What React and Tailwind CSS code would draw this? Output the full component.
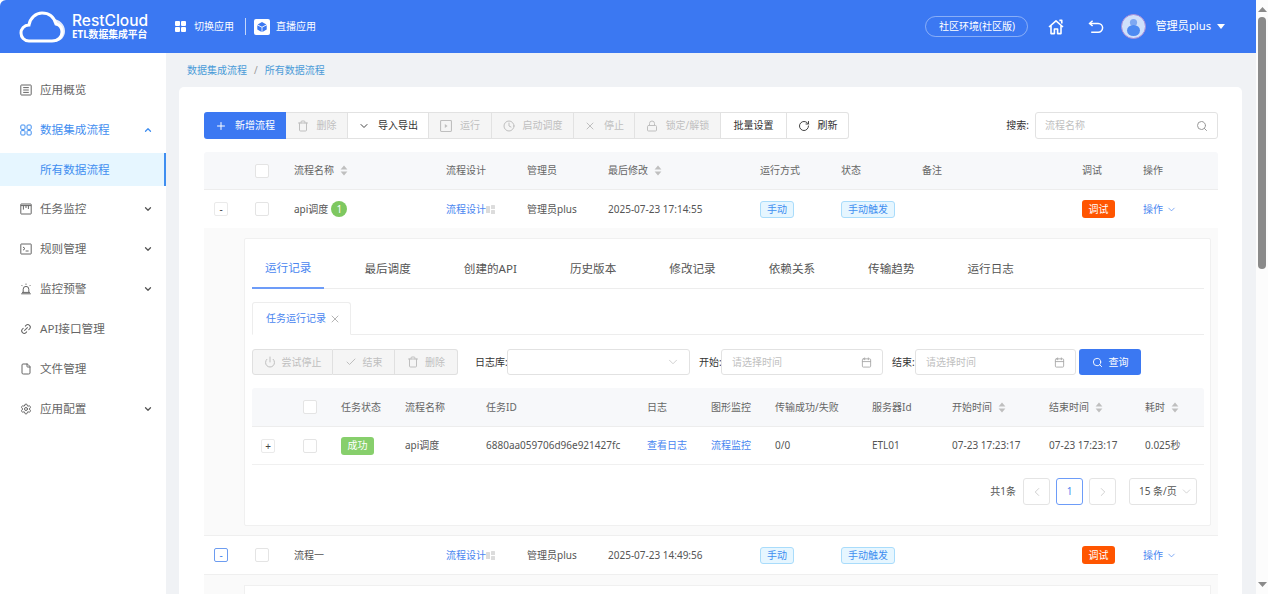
import React from "react";
import {
  Check, ChevronDown, ChevronLeft, ChevronRight, ChevronUp, Clock, File, Lock, Plus, Power,
  RotateCw, Search, Settings, Trash, X, Calendar, Link2,
} from "lucide-react";

const FONT = { fontFamily: '"Noto Sans","Noto Sans CJK SC",sans-serif' };

const Cloud = () => (
  <svg width="48" height="32" viewBox="0 0 48 32" fill="none">
    <path d="M34 8c6 0 12 5 12 12 0 6-4 10-10 11H24c8-1 13-5 13-11 0-5-2-9-3-12z" fill="#fff" fillOpacity=".85" />
    <path d="M10 30C5 30 2 26 2 22c0-4 3-8 8-8 1-7 7-12 13-12 7 0 12 4 14 11 4 1 6 4 6 8 0 5-4 9-10 9z" fill="#3b78f2" stroke="#fff" strokeWidth="3" />
  </svg>
);

const GridIcon = () => (
  <svg width="11" height="11" viewBox="0 0 11 11" fill="#fff">
    <rect width="5" height="5" rx="1" /><rect x="6" width="5" height="5" rx="1" />
    <rect y="6" width="5" height="5" rx="1" /><rect x="6" y="6" width="5" height="5" rx="1" />
  </svg>
);

const BoxIcon = () => (
  <span className="flex h-4 w-4 items-center justify-center rounded-[2px] bg-white">
    <svg width="10" height="10" viewBox="0 0 10 10" fill="#3b78f2">
      <path d="M5 0l4.4 2.4L5 4.8.6 2.4zM.3 3.2l4.3 2.4V10L.3 7.6zM9.7 3.2L5.4 5.6V10l4.3-2.4z" />
    </svg>
  </span>
);

const HomeIcon = () => (
  <svg width="16" height="16" viewBox="0 0 16 16" fill="none" stroke="#fff" strokeWidth="1.6" strokeLinejoin="round">
    <path d="M1 8l7-6.2L15 8M3 6.8V14.6h3.4V10h3.2v4.6H13V6.8" />
    <path d="M11.4 1.4h2.4v3" />
  </svg>
);

const BackIcon = () => (
  <svg width="16" height="14" viewBox="0 0 16 14" fill="none" stroke="#fff" strokeWidth="1.5">
    <path d="M4.6.8L1.6 3.4l3 2.6" />
    <path d="M1.8 3.4h8.4a4.4 4.4 0 010 8.8H3.2" />
  </svg>
);

const Avatar = () => (
  <span className="flex h-[25px] w-[25px] items-center justify-center overflow-hidden rounded-full border border-[#a78bd8] bg-[#cfe0fb]">
    <svg width="23" height="23" viewBox="0 0 23 23" fill="#4d8af2">
      <circle cx="11.5" cy="7.5" r="3.6" fill="#7ea8f2" />
      <ellipse cx="11.5" cy="15.5" rx="6.5" ry="5.5" />
    </svg>
  </span>
);

const OverviewIcon = () => (
  <svg width="12" height="12" viewBox="0 0 12 12" fill="none" stroke="#666" strokeWidth="1">
    <rect x=".8" y="1" width="10.4" height="10" rx=".6" />
    <path d="M3.2 3.6h5.6M3.2 6h5.6M3.2 8.4h5.6" />
  </svg>
);

const FlowIcon = () => (
  <svg width="12" height="12" viewBox="0 0 12 12" fill="none" stroke="#3f8ef0" strokeWidth="1">
    <rect x=".8" y="1" width="4.2" height="4.4" rx="1" /><rect x="7" y="1" width="4.2" height="4.4" rx="1" />
    <rect x=".8" y="6.6" width="4.2" height="4.4" rx="1" /><rect x="7" y="6.6" width="4.2" height="4.4" rx="1" />
  </svg>
);

const MonitorIcon = () => (
  <svg width="12" height="12" viewBox="0 0 12 12" fill="none" stroke="#666" strokeWidth="1">
    <rect x=".8" y="1" width="10.4" height="10" rx=".4" />
    <path d="M.8 2.6h10.4M3.4 2.6v4M6 2.6v2.4M8.4 2.6v3.4" />
  </svg>
);

const RuleIcon = () => (
  <svg width="12" height="12" viewBox="0 0 12 12" fill="none" stroke="#666" strokeWidth="1">
    <rect x=".8" y="1" width="10.4" height="10" rx=".4" />
    <path d="M3 4l2 1.6L3 7.2M5.6 8h3" />
  </svg>
);

const AlarmIcon = () => (
  <svg width="12" height="12" viewBox="0 0 12 12" fill="none" stroke="#666" strokeWidth="1">
    <path d="M3.2 9.4V6.2a2.8 2.8 0 015.6 0v3.2M1.2 10.8h9.6M2 9.4h8M6 .6v1.2M1.6 2.2l.9.9M10.4 2.2l-.9.9" />
  </svg>
);

const SortIcon = () => (
  <svg width="8" height="11" viewBox="0 0 8 11" fill="#bfbfbf" className="ml-[6px]">
    <path d="M4 .5L7.4 4.5H.6zM4 10.5L.6 6.5h6.8z" />
  </svg>
);

const PlayBox = () => (
  <svg width="12" height="12" viewBox="0 0 11 11" fill="none" stroke="#bfbfbf">
    <rect x=".5" y=".5" width="10" height="10" rx=".8" />
    <path d="M4.4 3.6l2.6 1.9-2.6 1.9z" fill="#bfbfbf" stroke="none" />
  </svg>
);

const FlowMark = () => (
  <svg width="9" height="9" viewBox="0 0 9 9" fill="#dcdcdc">
    <rect y="1" width="4" height="7" rx=".5" /><rect x="5" y="0" width="4" height="4" rx=".5" /><rect x="5" y="5" width="4" height="4" rx=".5" />
  </svg>
);

const Checkbox = () => <span className="block h-[14px] w-[14px] rounded-[2px] border border-[#e4e4e4] bg-white" />;

const menu = [
  { label: "应用概览", icon: <OverviewIcon /> },
  { label: "数据集成流程", icon: <FlowIcon />, open: true },
  { label: "任务监控", icon: <MonitorIcon />, arrow: true },
  { label: "规则管理", icon: <RuleIcon />, arrow: true },
  { label: "监控预警", icon: <AlarmIcon />, arrow: true },
  { label: "API接口管理", icon: <Link2 size={12} color="#666" className="-rotate-45" /> },
  { label: "文件管理", icon: <File size={12} color="#666" /> },
  { label: "应用配置", icon: <Settings size={12} color="#666" />, arrow: true },
];

const Sidebar = () => (
  <aside className="w-[166px] shrink-0 bg-white pt-[17px] text-[11.6px] text-[#666]">
    {menu.map((item) => (
      <React.Fragment key={item.label}>
        <div className={`flex h-[40px] items-center pl-[20px] pr-[13px] ${item.open ? "text-[#3f8ef0]" : ""}`}>
          <span className="mr-[8px] flex w-[12px] justify-center">{item.icon}</span>
          <span className="flex-1">{item.label}</span>
          {item.arrow && <ChevronDown size={10} strokeWidth={3} color="#555" />}
          {item.open && <ChevronUp size={10} strokeWidth={3} color="#3f8ef0" />}
        </div>
        {item.open && (
          <div className="my-[3px] flex h-[33px] items-center border-r-2 border-[#3f8ef0] bg-[#e6f6ff] pl-[40px] text-[#3f8ef0]">
            所有数据流程
          </div>
        )}
      </React.Fragment>
    ))}
  </aside>
);

const Header = () => (
  <header className="flex h-[53px] items-center rounded-tl-[6px] bg-[#3b78f2] pl-[19px] pr-[31px] text-white">
    <Cloud />
    <div className="ml-[5px] flex flex-col leading-none">
      <span className="text-[15.5px] font-medium leading-[16px]" style={{ fontFamily: "Inter, sans-serif" }}>RestCloud</span>
      <span className="text-[9.8px] font-bold leading-[11px]">ETL数据集成平台</span>
    </div>
    <div className="ml-[27px] flex items-center text-[10px]">
      <GridIcon />
      <span className="ml-[8px]">切换应用</span>
      <span className="ml-[11px] mr-[8px] h-[17px] w-px bg-white/70" />
      <BoxIcon />
      <span className="ml-[6px]">直播应用</span>
    </div>
    <div className="ml-auto flex items-center">
      <span className="flex h-[21px] w-[103px] items-center justify-center rounded-full border border-white/40 text-[10px]">社区环境(社区版)</span>
      <span className="ml-[20px]"><HomeIcon /></span>
      <span className="ml-[24px]"><BackIcon /></span>
      <span className="ml-[17px]"><Avatar /></span>
      <span className="ml-[9px] text-[11.2px]">管理员plus</span>
      <svg width="8" height="5" viewBox="0 0 8 5" fill="#fff" className="ml-[6px]"><path d="M0 0h8L4 5z" /></svg>
    </div>
  </header>
);

const ToolBtn = ({ w, icon, label, disabled, first, last }) => (
  <div
    className={`flex h-[27px] items-center justify-center gap-[8px] border-y border-r border-[#e2e2e2] text-[10px] ${w} ${
      disabled ? "bg-[#f5f5f5] text-[#bfbfbf]" : "bg-white text-[#333]"
    } ${first ? "rounded-l-[3px] border-l" : ""} ${last ? "rounded-r-[3px]" : ""}`}
  >
    {icon}
    <span>{label}</span>
  </div>
);

const Toolbar = () => (
  <div className="flex items-center">
    <div className="flex h-[27px] w-[82px] items-center justify-center gap-[8px] rounded-l-[3px] bg-[#3b78f2] text-[10px] text-white">
      <Plus size={12} />
      <span>新增流程</span>
    </div>
    <ToolBtn w="w-[62px]" disabled icon={<Trash size={12} />} label="删除" />
    <ToolBtn w="w-[81px]" icon={<ChevronDown size={12} color="#444" />} label="导入导出" />
    <ToolBtn w="w-[63px]" disabled icon={<PlayBox />} label="运行" />
    <ToolBtn w="w-[82px]" disabled icon={<Clock size={12} />} label="启动调度" />
    <ToolBtn w="w-[61px]" disabled icon={<X size={12} />} label="停止" />
    <ToolBtn w="w-[86px]" disabled icon={<Lock size={12} />} label="锁定/解锁" />
    <ToolBtn w="w-[66px]" label="批量设置" />
    <ToolBtn w="w-[62px]" last icon={<RotateCw size={12} color="#444" />} label="刷新" />
    <span className="ml-auto mr-[6px] text-[10px] text-[#333]">搜索:</span>
    <div className="flex h-[27px] w-[183px] items-center justify-between rounded-[3px] border border-[#e2e2e2] px-[9px] text-[10px] text-[#bfbfbf]">
      <span>流程名称</span>
      <Search size={12} color="#999" />
    </div>
  </div>
);

const MAIN_GRID = "grid grid-cols-[51px_39px_152px_81px_81px_152px_81px_81px_160px_61px_75px] items-center";

const Tag = ({ children }) => (
  <span className="inline-flex h-[17px] items-center rounded-[3px] border border-[#a9dcfb] bg-[#e6f6ff] px-[6px] text-[10px] text-[#3f8ef0]">{children}</span>
);

const ExpandBtn = ({ active, inner, children }) => (
  <span className={`flex h-[14px] w-[14px] items-center justify-center rounded-[2px] border bg-white text-[10px] leading-none ${inner ? "ml-[9px]" : "ml-[10px]"} ${active ? "border-[#6d9cf0] text-[#3f7ff0]" : "border-[#eaeaea] text-[#444]"}`}>
    {children}
  </span>
);

const FlowRow = ({ name, badge, date, active }) => (
  <div className={`${MAIN_GRID} h-[38px] bg-white text-[10px] text-[#555]`}>
    <ExpandBtn active={active}>-</ExpandBtn>
    <Checkbox />
    <div className="flex items-center">
      <span>{name}</span>
      {badge && <span className="ml-[3px] flex h-[16px] w-[16px] items-center justify-center rounded-full bg-[#7ec860] text-[10px] text-white">{badge}</span>}
    </div>
    <div className="flex items-center text-[#4a86f0]">流程设计<FlowMark /></div>
    <div>管理员plus</div>
    <div>{date}</div>
    <div><Tag>手动</Tag></div>
    <div><Tag>手动触发</Tag></div>
    <div />
    <div><span className="inline-flex h-[18px] w-[33px] items-center justify-center rounded-[3px] bg-[#ff5500] text-[10px] text-white">调试</span></div>
    <div className="flex items-center gap-[3px] text-[#4a86f0]">操作<ChevronDown size={11} strokeWidth={1.5} /></div>
  </div>
);

const tabs = ["运行记录", "最后调度", "创建的API", "历史版本", "修改记录", "依赖关系", "传输趋势", "运行日志"];

const Tabs = () => (
  <div className="flex h-[50px] gap-[27px] border-b border-[#ededed] text-[11.6px] text-[#555]">
    {tabs.map((t, i) => (
      <div key={t} className={`flex h-[50px] items-center px-[13px] ${i === 0 ? "border-b-2 border-[#6d9cf8] pt-[9px] text-[#4a86f0]" : "pt-[9px]"}`}>{t}</div>
    ))}
  </div>
);

const SubBtn = ({ w, icon, label, first, last }) => (
  <div className={`flex h-[26px] items-center justify-center gap-[6px] border-y border-r border-[#e0e0e0] bg-[#f5f5f5] text-[10px] text-[#bfbfbf] ${w} ${first ? "rounded-l-[3px] border-l" : ""} ${last ? "rounded-r-[3px]" : ""}`}>
    {icon}
    <span>{label}</span>
  </div>
);

const DateBox = ({ w }) => (
  <div className={`flex h-[26px] items-center justify-between rounded-[3px] border border-[#e2e2e2] bg-white pl-[10px] pr-[10px] text-[10px] text-[#bfbfbf] ${w}`}>
    <span>请选择时间</span>
    <Calendar size={11} color="#aaa" />
  </div>
);

const RUN_GRID = "grid grid-cols-[51px_38px_64px_81px_161px_64px_64px_97px_80px_97px_96px_59px] items-center";

const HeadCell = ({ children, sort }) => (
  <div className="flex items-center">{children}{sort && <SortIcon />}</div>
);

const RunTable = () => (
  <div className="mt-[13px]">
    <div className={`${RUN_GRID} h-[39px] rounded-t-[3px] border-b border-[#ededed] bg-[#f7f8fa] text-[10px] text-[#666]`}>
      <div />
      <Checkbox />
      <div>任务状态</div>
      <div>流程名称</div>
      <div>任务ID</div>
      <div>日志</div>
      <div>图形监控</div>
      <div>传输成功/失败</div>
      <div>服务器Id</div>
      <HeadCell sort>开始时间</HeadCell>
      <HeadCell sort>结束时间</HeadCell>
      <HeadCell sort>耗时</HeadCell>
    </div>
    <div className={`${RUN_GRID} h-[38px] border-b border-[#f0f0f0] text-[10px] text-[#555]`}>
      <ExpandBtn inner>+</ExpandBtn>
      <Checkbox />
      <div><span className="inline-flex h-[18px] w-[33px] items-center justify-center rounded-[3px] bg-[#87cf6c] text-white">成功</span></div>
      <div>api调度</div>
      <div>6880aa059706d96e921427fc</div>
      <div className="text-[#4a86f0]">查看日志</div>
      <div className="text-[#4a86f0]">流程监控</div>
      <div>0/0</div>
      <div>ETL01</div>
      <div>07-23 17:23:17</div>
      <div>07-23 17:23:17</div>
      <div>0.025秒</div>
    </div>
  </div>
);

const PageBox = ({ children, active }) => (
  <span className={`flex h-[27px] w-[27px] items-center justify-center rounded-[3px] border text-[10px] ${active ? "border-[#6d9cf8] text-[#4a86f0]" : "border-[#e4e4e4] text-[#bfbfbf]"}`}>{children}</span>
);

const Pager = () => (
  <div className="mt-[13px] flex items-center justify-end pr-[7px] text-[10px] text-[#555]">
    <span className="mr-[7px]">共1条</span>
    <div className="flex gap-[6px]">
      <PageBox><ChevronLeft size={14} strokeWidth={1.25} /></PageBox>
      <PageBox active>1</PageBox>
      <PageBox><ChevronRight size={14} strokeWidth={1.25} /></PageBox>
    </div>
    <div className="ml-[13px] flex h-[27px] w-[68px] items-center justify-between rounded-[3px] border border-[#e4e4e4] pl-[9px] pr-[3px]">
      <span>15 条/页</span>
      <ChevronDown size={13} strokeWidth={1.25} color="#bfbfbf" />
    </div>
  </div>
);

const Detail = () => (
  <div className="border-b border-[#efefef] bg-[#fafafa] pb-[9px] pl-[40px] pr-[7px] pt-[10px]">
    <div className="h-[288px] rounded-[2px] border border-[#f0f0f0] bg-white pl-[7px] pr-[6px]">
      <Tabs />
      <div className="mt-[13px] flex h-[33px] border-b border-[#ededed]">
        <div className="flex h-[33px] w-[99px] items-center gap-[3px] rounded-t-[3px] border border-b-white border-[#ededed] bg-white pl-[13px] text-[10px] text-[#4a86f0]">
          任务运行记录
          <X size={12} strokeWidth={1.25} color="#888" />
        </div>
      </div>
      <div className="mt-[14px] flex items-center text-[10px] text-[#333]">
        <SubBtn w="w-[81px]" first icon={<Power size={12} />} label="尝试停止" />
        <SubBtn w="w-[62px]" icon={<Check size={12} />} label="结束" />
        <SubBtn w="w-[63px]" last icon={<Trash size={12} />} label="删除" />
        <span className="ml-[17px] w-[32px] whitespace-nowrap">日志库:</span>
        <div className="flex h-[26px] w-[183px] items-center justify-end rounded-[3px] border border-[#e2e2e2] bg-white pr-[9px]">
          <ChevronDown size={14} strokeWidth={1.25} color="#bfbfbf" />
        </div>
        <span className="ml-[9px] w-[22px] whitespace-nowrap">开始:</span>
        <DateBox w="w-[162px]" />
        <span className="ml-[9px] w-[23px] whitespace-nowrap">结束:</span>
        <DateBox w="w-[161px]" />
        <div className="ml-[3px] flex h-[26px] w-[62px] items-center justify-center gap-[6px] rounded-[3px] bg-[#3b78f2] text-white">
          <Search size={11} />
          查询
        </div>
      </div>
      <RunTable />
      <Pager />
    </div>
  </div>
);

const Scrollbar = () => (
  <div className="flex w-[12px] shrink-0 flex-col items-center bg-[#fcfcfc] pt-[7px]">
    <svg width="9" height="5" viewBox="0 0 9 5" fill="#8a8a8a"><path d="M4.5 0L9 5H0z" /></svg>
    <div className="mt-[5px] h-[252px] w-[8px] rounded-[4px] bg-[#8a8a8a]" />
    <svg width="9" height="5" viewBox="0 0 9 5" fill="#8a8a8a" className="mt-auto mb-[7px]"><path d="M4.5 5L0 0h9z" /></svg>
  </div>
);

export default function App() {
  return (
    <div className="flex h-[594px] w-[1268px] overflow-hidden bg-white" style={FONT}>
      <div className="flex min-w-0 flex-1 flex-col">
        <Header />
        <div className="flex min-h-0 flex-1">
          <Sidebar />
          <main className="min-w-0 flex-1 overflow-hidden bg-[#f0f2f5] pl-[13px] pr-[14px]">
            <div className="flex h-[34px] items-center pl-[8px] text-[10px] text-[#4a9bd8]">
              数据集成流程
              <span className="mx-[7px] text-[#999]">/</span>
              所有数据流程
            </div>
            <div className="h-[600px] rounded-t-[5px] bg-white pl-[25px] pr-[24px] pt-[25px]">
              <Toolbar />
              <div className={`${MAIN_GRID} mt-[13px] h-[38px] rounded-t-[3px] border-b border-[#ededed] bg-[#f7f8fa] text-[10px] text-[#666]`}>
                <div />
                <Checkbox />
                <HeadCell sort>流程名称</HeadCell>
                <div>流程设计</div>
                <div>管理员</div>
                <HeadCell sort>最后修改</HeadCell>
                <div>运行方式</div>
                <div>状态</div>
                <div>备注</div>
                <div>调试</div>
                <div>操作</div>
              </div>
              <FlowRow name="api调度" badge="1" date="2025-07-23 17:14:55" />
              <Detail />
              <div className="border-b border-[#efefef]">
                <FlowRow name="流程一" date="2025-07-23 14:49:56" active />
              </div>
              <div className="bg-[#fafafa] pl-[40px] pr-[7px] pt-[10px]">
                <div className="h-[100px] border border-[#f0f0f0] bg-white" />
              </div>
            </div>
          </main>
        </div>
      </div>
      <Scrollbar />
    </div>
  );
}
